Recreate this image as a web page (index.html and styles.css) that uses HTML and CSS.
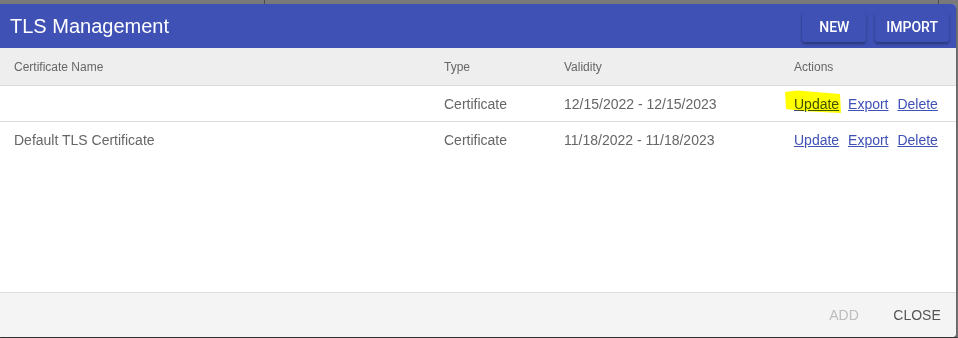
FILE: index.html
```
<!DOCTYPE html>
<html lang="en">
<head>
	<meta charset="UTF-8">
	<title>TLS Management</title>
	<link rel="stylesheet" href="styles.css">
</head>
<body>
	<div class="backdrop">
		<div class="strip">
			<span class="seg seg-a"></span>
			<span class="seg seg-b"></span>
		</div>
		<div class="dialog">
			<div class="dialog-title">
				<h2>TLS Management</h2>
				<div class="title-actions">
					<button class="raised">New</button>
					<button class="raised">Import</button>
				</div>
			</div>
			<div class="dialog-body">
				<table class="cert-table">
					<colgroup>
						<col class="c-name">
						<col class="c-type">
						<col class="c-valid">
						<col>
					</colgroup>
					<thead>
						<tr>
							<th>Certificate Name</th>
							<th>Type</th>
							<th>Validity</th>
							<th>Actions</th>
						</tr>
					</thead>
					<tbody>
						<tr>
							<td></td>
							<td>Certificate</td>
							<td>12/15/2022 - 12/15/2023</td>
							<td class="actions">
								<span class="marked">
									<a href="#">Update</a>
									<svg class="marker" width="60" height="26" viewBox="0 0 60 26">
										<path d="M0 2 L12 0.5 L55 4 L56 23 L16 21 L1 19 Z" fill="#ffff00"/>
									</svg>
								</span>
								<a href="#">Export</a>
								<a href="#">Delete</a>
							</td>
						</tr>
						<tr>
							<td>Default TLS Certificate</td>
							<td>Certificate</td>
							<td>11/18/2022 - 11/18/2023</td>
							<td class="actions">
								<a href="#">Update</a>
								<a href="#">Export</a>
								<a href="#">Delete</a>
							</td>
						</tr>
					</tbody>
				</table>
			</div>
			<div class="dialog-footer">
				<button class="flat" disabled>Add</button>
				<button class="flat">Close</button>
			</div>
		</div>
	</div>
</body>
</html>
```

FILE: styles.css
```
		html, body{
			margin: 0;
			height: 100%;
		}
		body{
			background: #4a4a4a;
			font-family: "Liberation Sans", Arial, sans-serif;
			overflow: hidden;
		}
		.backdrop{
			background: #7a7a7a;
			height: 337px;
		}
		.strip{
			display: flex;
			height: 4px;
		}
		.seg{
			border-right: 1px solid #4d4d4d;
		}
		.seg-a{
			width: 264px;
		}
		.seg-b{
			width: 673px;
		}
		.dialog{
			width: 956px;
			height: 333px;
			background: #fff;
			border-radius: 0 4px 4px 0;
			overflow: hidden;
			display: flex;
			flex-direction: column;
			box-shadow: 0 2px 3px rgba(0,0,0,.4);
		}
		.dialog-title{
			background: #3f51b5;
			height: 44px;
			display: flex;
			align-items: center;
			justify-content: space-between;
			padding: 0 7px 0 10px;
			flex-shrink: 0;
		}
		.dialog-title h2{
			margin: 0;
			color: #fff;
			font-size: 20px;
			font-weight: normal;
			padding-top: 1px;
		}
		.title-actions{
			display: flex;
			gap: 9px;
			padding-top: 1px;
		}
		.raised{
			background: #3f51b5;
			color: #fff;
			border: none;
			border-radius: 3px;
			height: 30px;
			min-width: 64px;
			padding: 0 11px;
			font-family: Roboto, sans-serif;
			font-weight: 500;
			font-size: 14px;
			text-transform: uppercase;
			box-shadow: 0 2px 3px rgba(0,0,0,.35);
		}
		.dialog-body{
			flex: 1;
		}
		.cert-table{
			width: 100%;
			border-collapse: collapse;
			table-layout: fixed;
			color: #666;
		}
		.c-name{ width: 430px; }
		.c-type{ width: 120px; }
		.c-valid{ width: 230px; }
		.cert-table th{
			background: #eeeeee;
			text-align: left;
			font-weight: normal;
			font-size: 12px;
			height: 37px;
			padding: 0 0 0 14px;
			border-bottom: 1px solid #dcdcdc;
		}
		.cert-table td{
			font-size: 14px;
			height: 35px;
			padding: 0 0 0 14px;
			border-bottom: 1px solid #dcdcdc;
		}
		.cert-table tbody tr:last-child td{
			border-bottom: none;
		}
		.actions a{
			color: #3f51b5;
			margin-right: 5px;
		}
		.marked{
			position: relative;
		}
		.marker{
			position: absolute;
			left: -9px;
			top: -6px;
			mix-blend-mode: multiply;
			pointer-events: none;
		}
		.dialog-footer{
			height: 44px;
			background: #f4f4f4;
			border-top: 1px solid #dddddd;
			display: flex;
			align-items: center;
			justify-content: flex-end;
			gap: 9px;
			padding-right: 7px;
			flex-shrink: 0;
		}
		.flat{
			background: none;
			border: none;
			min-width: 64px;
			height: 30px;
			padding: 0 8px;
			font-family: "Liberation Sans", Arial, sans-serif;
			font-size: 14px;
			text-transform: uppercase;
			color: #555;
		}
		.flat:disabled{
			color: #bdbdbd;
		}
```
